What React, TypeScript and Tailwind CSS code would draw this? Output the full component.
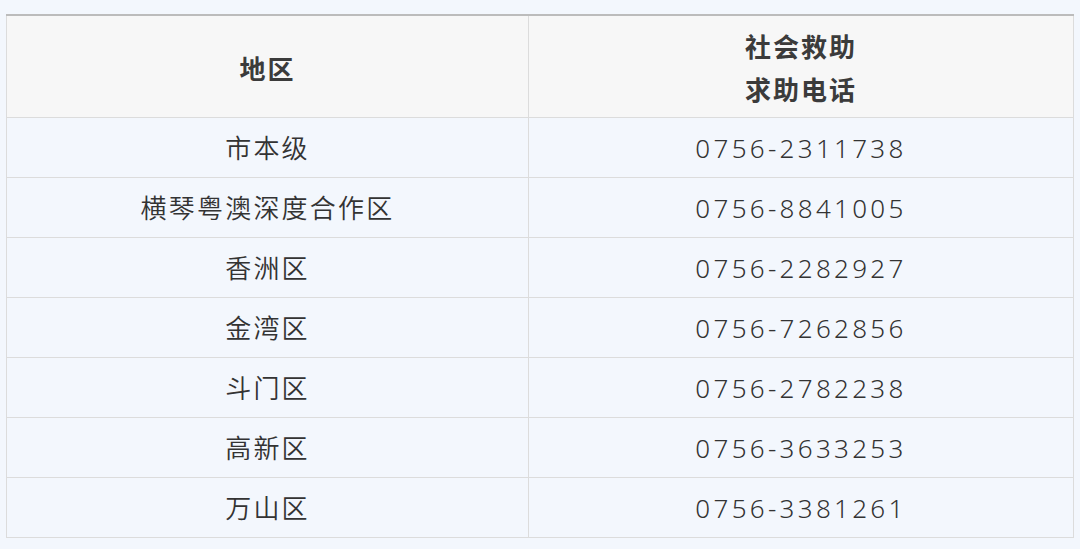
const rows = [
  ["市本级", "0756-2311738"],
  ["横琴粤澳深度合作区", "0756-8841005"],
  ["香洲区", "0756-2282927"],
  ["金湾区", "0756-7262856"],
  ["斗门区", "0756-2782238"],
  ["高新区", "0756-3633253"],
  ["万山区", "0756-3381261"],
];

export default function App() {
  return (
    <div className="w-[1080px] h-[549px] bg-[#f3f7fd] pt-[14px] px-[6px] font-['Noto_Sans','Noto_Sans_CJK_SC',sans-serif] text-[#3b3b3b]">
      <table className="w-[1068px] border-collapse border-t-2 border-t-[#bcbcbc]">
        <thead>
          <tr className="bg-[#f7f7f7]">
            <th className="w-[522px] h-[102px] pt-[6px] border border-[#dcdcdc] border-t-0 text-[26px] font-bold tracking-[2px]">
              地区
            </th>
            <th className="h-[102px] pt-[6px] border border-[#dcdcdc] border-t-0 text-[26px] font-bold leading-[43px] tracking-[2px]">
              社会救助
              <br />
              求助电话
            </th>
          </tr>
        </thead>
        <tbody>
          {rows.map((row) => (
            <tr key={row[0]}>
              <td className="h-[60px] pt-[2px] border border-[#dcdcdc] text-center text-[26px] font-[350] text-[#333] tracking-[2.2px]">
                {row[0]}
              </td>
              <td className="h-[60px] pt-[2px] border border-[#dcdcdc] text-center text-[26px] font-[350] text-[#333] tracking-[3.3px]">
                {row[1]}
              </td>
            </tr>
          ))}
        </tbody>
      </table>
    </div>
  );
}
